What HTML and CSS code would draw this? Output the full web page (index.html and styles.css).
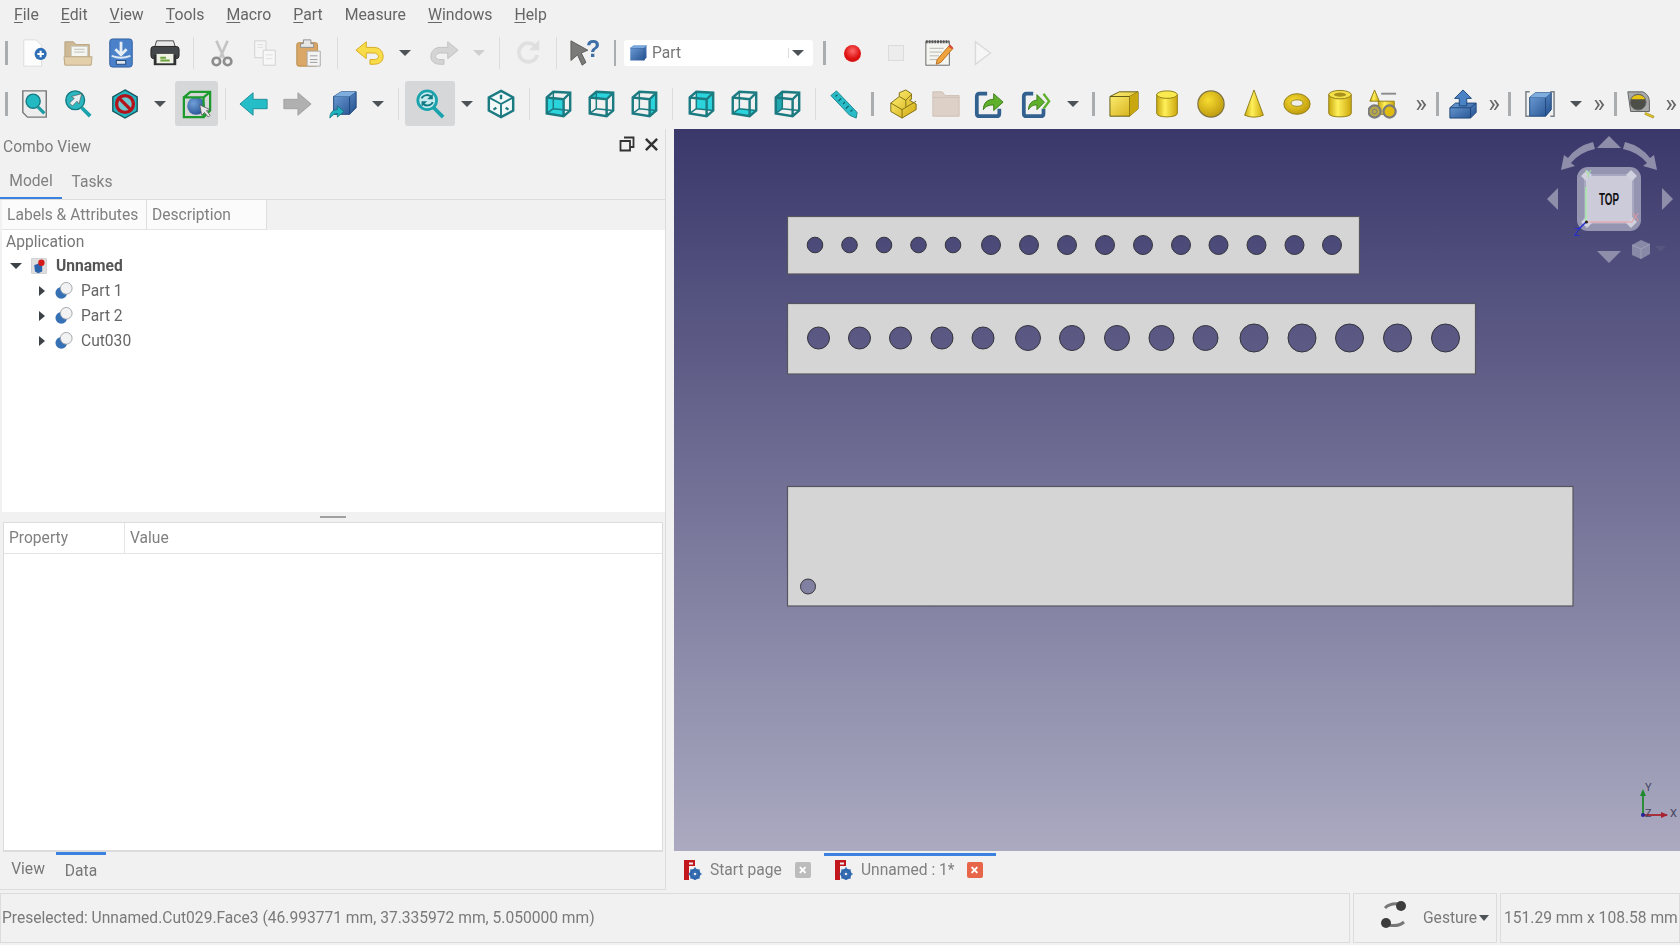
FILE: index.html
```html
<!DOCTYPE html>
<html lang="en">
<head>
    <meta charset="UTF-8">
    <meta name="viewport" content="width=device-width, initial-scale=1.0">
    <title>FreeCAD</title>
    <link rel="stylesheet" href="styles.css">
</head>
<body>
    <svg class="sprite" xmlns="http://www.w3.org/2000/svg">
        <defs>
            <linearGradient id="gy" x1="0" y1="0" x2="1" y2="1"><stop offset="0" stop-color="#fff27a"/><stop offset="1" stop-color="#d2a90e"/></linearGradient>
            <linearGradient id="gc" x1="0" y1="0" x2="1" y2="0"><stop offset="0" stop-color="#c9a80f"/><stop offset=".4" stop-color="#fff05a"/><stop offset="1" stop-color="#cda70d"/></linearGradient>
            <linearGradient id="gb" x1="0" y1="0" x2="1" y2="1"><stop offset="0" stop-color="#6f9fd8"/><stop offset="1" stop-color="#23508f"/></linearGradient>
            <radialGradient id="gs" cx=".4" cy=".35" r=".75"><stop offset="0" stop-color="#f8dc30"/><stop offset="1" stop-color="#b8930b"/></radialGradient>
            <radialGradient id="gball" cx=".35" cy=".35" r=".8"><stop offset="0" stop-color="#6f9fd8"/><stop offset="1" stop-color="#1f4b8e"/></radialGradient>

            <symbol id="new" viewBox="0 0 32 32"><path d="M4 2h13l6 6v22H4z" fill="#fdfdfd" stroke="#dcdcdc"/><circle cx="22" cy="17" r="6.500" fill="#2f6fb5"/><path d="M22 13.500v7M18.500 17h7" stroke="#fff" stroke-width="2.200"/></symbol>
            <symbol id="open" viewBox="0 0 32 32"><path d="M2 28V4h9l3 3h14v21z" fill="#cdb996" stroke="#b7a37f"/><rect x="9" y="9" width="17" height="11" fill="#f5f5f2" stroke="#cfcfc8"/><path d="M12 12h11M12 15h11" stroke="#bdbdb5"/><path d="M1 20h30l-1 9H2z" fill="#e3cfaa" stroke="#bba884"/></symbol>
            <symbol id="save" viewBox="0 0 32 32"><rect x="4" y="1" width="24" height="30" rx="3" fill="#4a81c9" stroke="#2f5f9f"/><path d="M16 4v13M10 12l6 6 6-6" fill="none" stroke="#e6edf5" stroke-width="3"/><path d="M6 19q10 4 20 0" fill="none" stroke="#dfe8f2" stroke-width="2"/><rect x="11" y="24" width="10" height="4" fill="#e0e6ee" stroke="#23487a"/></symbol>
            <symbol id="print" viewBox="0 0 32 32"><path d="M7 3h18l2 7H5z" fill="#e8e8e8" stroke="#444"/><rect x="1" y="9" width="30" height="13" rx="3" fill="#45484a" stroke="#222"/><rect x="4" y="18" width="24" height="11" fill="#2e3032"/><rect x="7" y="17" width="18" height="10" fill="#eef1e4"/><path d="M11 21h6M11 24h10" stroke="#6da33c" stroke-width="2"/></symbol>
            <symbol id="cut" viewBox="0 0 32 32"><path d="M10 3l8 18M22 3l-8 18" stroke="#c4c4c4" stroke-width="2.800"/><circle cx="10" cy="25" r="4" fill="none" stroke="#8d8d8d" stroke-width="2.800"/><circle cx="22" cy="25" r="4" fill="none" stroke="#8d8d8d" stroke-width="2.800"/></symbol>
            <symbol id="copy" viewBox="0 0 32 32"><path d="M5 3h12v18H5z" fill="#f5f5f5" stroke="#d0d0d0"/><path d="M14 13h13v16H14z" fill="#f7f7f7" stroke="#d0d0d0"/><path d="M8 7h6M8 10h6M17 18h7M17 22h7" stroke="#dedede"/></symbol>
            <symbol id="paste" viewBox="0 0 32 32"><rect x="3" y="5" width="22" height="25" rx="2" fill="#dba766" stroke="#b98844"/><path d="M10 6V2h8v4h3v4H7V6z" fill="#e6e6e6" stroke="#8b8b8b"/><path d="M14 14h14v16H14z" fill="#f3f3f3" stroke="#aaa"/><path d="M17 19h8M17 23h8M17 26h8" stroke="#9a9a9a"/></symbol>
            <symbol id="undo" viewBox="0 0 32 32"><path d="M1 13L12 4v6h8c7 0 10 5 10 10s-4 8-10 8h-4v-5h4c3 0 5-1 5-3s-2-4-5-4h-8v6z" fill="#f9dc4a" stroke="#d5a919"/></symbol>
            <symbol id="redo" viewBox="0 0 32 32"><path d="M31 13L20 4v6h-8C5 10 2 15 2 20s4 8 10 8h4v-5h-4c-3 0-5-1-5-3s2-4 5-4h8v6z" fill="#d4d4d4" stroke="#c0c0c0"/></symbol>
            <symbol id="refresh" viewBox="0 0 32 32"><path d="M26 18a10 10 0 1 1-3-10" fill="none" stroke="#e0e0e0" stroke-width="4"/><path d="M28 2v11H17z" fill="#dfdfdf"/></symbol>
            <symbol id="help" viewBox="0 0 32 32"><path d="M1 3l18 10-7 3 5 10-4 3-5-11-7 6z" fill="#7a7a78" stroke="#5c5c5a"/><text x="17" y="20" class="help-mark">?</text></symbol>
            <symbol id="part" viewBox="0 0 32 32"><path d="M2 8l5-4h21v19l-4 5H2z" fill="url(#gb)"/><path d="M2 8h22v20M24 8l4-4" fill="none" stroke="#2a5a99"/><path d="M2 8l5-4h21l-4 4z" fill="#79a8dd"/></symbol>
            <symbol id="macroedit" viewBox="0 0 32 32"><rect x="2" y="4" width="25" height="25" fill="#f4f4f0" stroke="#666"/><path d="M2 4h25" stroke="#555" stroke-width="3" stroke-dasharray="2 1"/><path d="M6 11h15M6 15h13M6 19h10M6 23h8" stroke="#b5b5b0"/><path d="M14 23L27 8l4 3-13 15-5 2z" fill="#f0a23c" stroke="#b76f1f"/><path d="M26 9l4 3 1-2-3-3z" fill="#d94a3a"/></symbol>
            <symbol id="play" viewBox="0 0 32 32"><path d="M9 4l16 12L9 28z" fill="#f6f6f6" stroke="#dadada" stroke-width="1.500"/></symbol>
            <symbol id="fitall" viewBox="0 0 32 32"><path d="M3 2h25v28H8l-5-5z" fill="#ededed" stroke="#777" stroke-width="1.500"/><circle cx="14" cy="13" r="7.500" fill="#22b9c3" stroke="#167a82" stroke-width="1.500"/><path d="M19 19l7 7" stroke="#1a9aa3" stroke-width="3.500"/></symbol>
            <symbol id="fitsel" viewBox="0 0 32 32"><circle cx="13" cy="12" r="10" fill="#2ab7c0" stroke="#167a82" stroke-width="1.500"/><path d="M20 20l9 9" stroke="#1aa3ac" stroke-width="4"/><path d="M20 5l-3 11-2-3-5 5-3-3 5-5-3-2z" fill="#e6eef0" stroke="#555" stroke-width=".7"/></symbol>
            <symbol id="draw" viewBox="0 0 32 32"><path d="M16 1l13 7.500v15L16 31 3 23.500v-15z" fill="#24b7c2" stroke="#17585f" stroke-width="1.500"/><circle cx="16" cy="16" r="9" fill="#6fc7cf" stroke="#b3141c" stroke-width="3.500"/><path d="M10 10l12 12" stroke="#b3141c" stroke-width="3.500"/></symbol>
            <symbol id="bbox" viewBox="0 0 32 32"><circle cx="15" cy="18" r="9.500" fill="url(#gball)"/><path d="M2 9h21v21H2zM2 9l7-6h21v20l-7 7M23 9l7-6" fill="none" stroke="#1d9a2d" stroke-width="2.400"/><path d="M19 17l2 11 3-3 4 5 2-2-4-5 4-1z" fill="#e8e8ea" stroke="#555" stroke-width=".8"/></symbol>
            <symbol id="back" viewBox="0 0 32 32"><path d="M1 16L15 4v7h15v10H15v7z" fill="#25bdc8" stroke="#1a8d96"/></symbol>
            <symbol id="forward" viewBox="0 0 32 32"><path d="M31 16L17 4v7H2v10h15v7z" fill="#b0b0b0" stroke="#a0a0a0"/></symbol>
            <symbol id="sync" viewBox="0 0 32 32"><path d="M6 8l8-5h16v17l-7 7H6z" fill="url(#gb)" stroke="#1d4478"/><path d="M6 8h17v19M23 8l7-5" fill="none" stroke="#1d4478"/><path d="M6 8l8-5h16l-7 5z" fill="#7fadde"/><path d="M2 31c0-6 3-9 8-9v-4l7 6-7 6v-4c-3 0-5 2-8 5z" fill="#1fb3bf" stroke="#11717a" stroke-width=".8"/></symbol>
            <symbol id="zoomsync" viewBox="0 0 32 32"><circle cx="13" cy="12" r="10" fill="#c6eaee" stroke="#1aa3ac" stroke-width="3"/><path d="M20 20l10 10" stroke="#1aa3ac" stroke-width="4"/><path d="M7 10c2-4 8-5 11-1M19 14c-2 4-8 5-11 1" fill="none" stroke="#127a82" stroke-width="2"/><path d="M19 5v6h-6zM7 19v-6h6z" fill="#127a82"/></symbol>
            <g id="wire"><path d="M4 9l7-6 18 1v19l-7 6-18-3zM4 9l18 2 7-7M22 11v18" fill="none" stroke="#1c7a81" stroke-width="2.600"/><path d="M11 3v18l-7 5M11 21l18 2" fill="none" stroke="#1c7a81" stroke-width="1.600"/></g>
            <symbol id="iso" viewBox="0 0 32 32"><path d="M16 2l13 7v14l-13 7-13-7V9z" fill="#f3f8f8" stroke="#1c7a81" stroke-width="2.600"/><path d="M3 9l13 7 13-7M16 16v14" fill="none" stroke="#1c7a81" stroke-width="2"/><path d="M16 6v5M8 22l3-2M24 22l-3-2" stroke="#1c7a81" stroke-width="2.500"/></symbol>
            <symbol id="vfront" viewBox="0 0 32 32"><path d="M4 9l18 2v18L4 26z" fill="#2bd3dc"/><use href="#wire"/></symbol>
            <symbol id="vtop" viewBox="0 0 32 32"><path d="M4 9l7-6 18 1-7 7z" fill="#2bd3dc"/><use href="#wire"/></symbol>
            <symbol id="vright" viewBox="0 0 32 32"><path d="M22 11l7-7v19l-7 6z" fill="#2bd3dc"/><use href="#wire"/></symbol>
            <symbol id="vrear" viewBox="0 0 32 32"><path d="M11 3l18 1v19l-18-2z" fill="#2bd3dc"/><use href="#wire"/></symbol>
            <symbol id="vbottom" viewBox="0 0 32 32"><path d="M4 26l7-5 18 2-7 6z" fill="#2bd3dc"/><use href="#wire"/></symbol>
            <symbol id="vleft" viewBox="0 0 32 32"><path d="M4 9l7-6v18l-7 5z" fill="#1fa8b0"/><use href="#wire"/></symbol>
            <symbol id="ruler" viewBox="0 0 32 32"><path d="M2 7l6-5 22 23-1 6-7-3z" fill="#27bcc7" stroke="#17838c"/><path d="M9 6l-2 2M13 10l-3 3M17 14l-2 2M21 18l-3 3M25 22l-2 2" stroke="#0f5f66" stroke-width="1.300"/></symbol>
            <symbol id="group" viewBox="0 0 32 32"><path d="M3 15l9-7v-4l7-3 6 4v6l-2 1 7 4v6l-15 9-12-7z" fill="url(#gy)" stroke="#7d6d10"/><path d="M3 15l12 7 15-9M15 22v9M12 8l7 4 6-6M19 12v7" fill="none" stroke="#7d6d10"/></symbol>
            <symbol id="folder" viewBox="0 0 32 32"><path d="M2 29V3h10l3 4h15v22z" fill="#ddd1c7" stroke="#cdbfb3"/><path d="M2 9h28" stroke="#cdbfb3"/></symbol>
            <symbol id="link" viewBox="0 0 32 32"><path d="M14 5H6q-3 0-3 3v18q0 3 3 3h18q3 0 3-3v-5" fill="none" stroke="#32608f" stroke-width="4"/><path d="M10 22c0-7 4-11 11-11V5l10 9-10 9v-6c-5 0-8 1-11 5z" fill="#5fb02c" stroke="#3a7a14"/></symbol>
            <symbol id="sublink" viewBox="0 0 32 32"><path d="M13 5H6q-3 0-3 3v18q0 3 3 3h15q3 0 3-3v-5" fill="none" stroke="#32608f" stroke-width="4"/><path d="M8 22c0-6 4-10 9-10V6l8 8-8 8v-5c-4 0-6 1-9 5z" fill="#5fb02c" stroke="#3a7a14"/><path d="M24 5l6 8-6 8" fill="none" stroke="#5fb02c" stroke-width="2.500"/></symbol>
            <symbol id="box" viewBox="0 0 32 32"><path d="M1 8l10-5h20v18l-9 8H1z" fill="url(#gy)" stroke="#5f5510"/><path d="M1 8h21v21M22 8l9-5" fill="none" stroke="#5f5510"/><path d="M22 8l9-5v18l-9 8z" fill="#c9a70f"/></symbol>
            <symbol id="cyl" viewBox="0 0 32 32"><path d="M5 6v20c0 5 22 5 22 0V6z" fill="url(#gc)" stroke="#8f7d14"/><ellipse cx="16" cy="6" rx="11" ry="4" fill="#f9ea50" stroke="#8f7d14"/></symbol>
            <symbol id="sphere" viewBox="0 0 32 32"><circle cx="16" cy="16" r="14" fill="url(#gs)" stroke="#7f7440" stroke-width="1.300"/></symbol>
            <symbol id="cone" viewBox="0 0 32 32"><path d="M16 1L6 28q10 4 20 0z" fill="url(#gc)" stroke="#8f7d14"/></symbol>
            <symbol id="torus" viewBox="0 0 32 32"><ellipse cx="16" cy="16" rx="14" ry="11" fill="url(#gs)" stroke="#8f7d14"/><ellipse cx="16" cy="15" rx="6.500" ry="3.500" fill="#efeeea" stroke="#9b8a1a"/></symbol>
            <symbol id="tube" viewBox="0 0 32 32"><path d="M4 6v20c0 5 24 5 24 0V6z" fill="url(#gc)" stroke="#8f7d14"/><ellipse cx="16" cy="6" rx="12" ry="4.500" fill="#f4e14a" stroke="#8f7d14"/><ellipse cx="16" cy="6" rx="6.500" ry="2.200" fill="#a8921c"/></symbol>
            <symbol id="builder" viewBox="0 0 32 32"><path d="M7 1L2 13h10z" fill="url(#gc)" stroke="#8f7d14"/><path d="M14 5h16" stroke="#8b8b8b" stroke-width="2"/><path d="M11 13h17v14H11z" fill="url(#gc)" stroke="#8f7d14"/><circle cx="7" cy="24" r="6.500" fill="#b8a84a" stroke="#7b7b7b" stroke-width="2.400"/><circle cx="7" cy="24" r="2.500" fill="none" stroke="#7b7b7b"/><circle cx="23" cy="24" r="6.500" fill="#e0bb10" stroke="#7b7b7b" stroke-width="2.400"/></symbol>
            <symbol id="extrude" viewBox="0 0 32 32"><path d="M2 20l6-5h22v10l-6 6H2z" fill="url(#gb)" stroke="#1d4478"/><path d="M2 20h22v11M24 20l6-5" fill="none" stroke="#1d4478"/><path d="M16 1l9 9h-5v8h-8v-8H7z" fill="#4a82c6" stroke="#1d4478"/></symbol>
            <symbol id="section" viewBox="0 0 32 32"><path d="M5 3H1v26h4M27 3h4v26h-4" fill="none" stroke="#7d8285" stroke-width="1.600"/><path d="M5 9l6-5h17v18l-6 7H5z" fill="url(#gb)" stroke="#1d4478"/><path d="M5 9h17v20M22 9l6-5" fill="none" stroke="#1d4478"/><path d="M5 9l6-5h17l-6 5z" fill="#7fadde"/></symbol>
            <symbol id="tape" viewBox="0 0 32 32"><path d="M3 3h16q7 3 7 11v10H6z" fill="#a9abab" stroke="#5e6060"/><circle cx="14" cy="14" r="8.500" fill="#4e4e48" stroke="#6c6c6c"/><path d="M6.500 11a8.500 8.500 0 0 1 15 0z" fill="#e7c414"/><path d="M22 25l9 4-1 2-9-4z" fill="#e8c71a" stroke="#8d7810" stroke-width=".6"/></symbol>
            <symbol id="doc" viewBox="0 0 20 20"><rect x=".5" y=".5" width="19" height="19" rx="1" fill="#dedede" stroke="#c8c8c8"/><path d="M4 9l5-2 5 2v8l-5 2-4-2z" fill="#2c64ab"/><circle cx="13" cy="6" r="4" fill="#d51a1a"/></symbol>
            <symbol id="cutobj" viewBox="0 0 20 20"><circle cx="7" cy="12" r="6.500" fill="#3670b5"/><circle cx="12.500" cy="7" r="6.500" fill="#f2f2f2" stroke="#9aa0a8"/></symbol>
            <symbol id="fc" viewBox="0 0 20 20"><path d="M2 0h11v6H7v14H2z" fill="#c2171d"/><rect x="7" y="2.500" width="4" height="2" fill="#eee"/><circle cx="13" cy="14" r="4" fill="none" stroke="#2f67ad" stroke-width="3"/><path d="M13 7.500v13M6.500 14h13M8.500 9.500l9 9M17.500 9.500l-9 9" stroke="#2f67ad" stroke-width="1.600"/><circle cx="13" cy="14" r="1.300" fill="#dfe7f1"/></symbol>
        </defs>
    </svg>

    <div class="app">
        <nav class="menubar">
            <span><u>F</u>ile</span>
            <span><u>E</u>dit</span>
            <span><u>V</u>iew</span>
            <span><u>T</u>ools</span>
            <span><u>M</u>acro</span>
            <span><u>P</u>art</span>
            <span>Measure</span>
            <span><u>W</u>indows</span>
            <span><u>H</u>elp</span>
        </nav>

        <div class="toolbar top-row">
            <i class="handle"></i>
            <span class="btn"><svg class="icon"><use href="#new"/></svg></span>
            <span class="btn"><svg class="icon"><use href="#open"/></svg></span>
            <span class="btn"><svg class="icon"><use href="#save"/></svg></span>
            <span class="btn ml1"><svg class="icon"><use href="#print"/></svg></span>
            <i class="sep"></i>
            <span class="btn"><svg class="icon"><use href="#cut"/></svg></span>
            <span class="btn"><svg class="icon"><use href="#copy"/></svg></span>
            <span class="btn ml1"><svg class="icon"><use href="#paste"/></svg></span>
            <i class="sep"></i>
            <span class="btn ml4"><svg class="icon"><use href="#undo"/></svg></span>
            <span class="dd"></span>
            <span class="btn ml4"><svg class="icon"><use href="#redo"/></svg></span>
            <span class="dd off"></span>
            <i class="sep"></i>
            <span class="btn"><svg class="icon"><use href="#refresh"/></svg></span>
            <i class="sep"></i>
            <span class="btn"><svg class="icon"><use href="#help"/></svg></span>
            <i class="sep dark-thin ml2"></i>
            <div class="workbench">
                <svg class="wb-icon"><use href="#part"/></svg>
                <span class="wb-name">Part</span>
                <i class="wb-tick"></i>
                <span class="dd-arrow"></span>
            </div>
            <i class="sep dark ml4"></i>
            <span class="btn"><i class="rec"></i></span>
            <span class="btn"><i class="stop"></i></span>
            <span class="btn"><svg class="icon"><use href="#macroedit"/></svg></span>
            <span class="btn"><svg class="icon"><use href="#play"/></svg></span>
        </div>

        <div class="toolbar">
            <i class="handle"></i>
            <span class="btn"><svg class="icon"><use href="#fitall"/></svg></span>
            <span class="btn"><svg class="icon"><use href="#fitsel"/></svg></span>
            <span class="btn ml4"><svg class="icon"><use href="#draw"/></svg></span>
            <span class="dd"></span>
            <span class="btn on ml2"><svg class="icon"><use href="#bbox"/></svg></span>
            <i class="sep"></i>
            <span class="btn"><svg class="icon"><use href="#back"/></svg></span>
            <span class="btn"><svg class="icon"><use href="#forward"/></svg></span>
            <span class="btn ml3"><svg class="icon"><use href="#sync"/></svg></span>
            <span class="dd"></span>
            <i class="sep"></i>
            <span class="btn on wide"><svg class="icon"><use href="#zoomsync"/></svg></span>
            <span class="dd slim"></span>
            <span class="btn"><svg class="icon"><use href="#iso"/></svg></span>
            <i class="sep"></i>
            <span class="btn"><svg class="icon"><use href="#vfront"/></svg></span>
            <span class="btn"><svg class="icon"><use href="#vtop"/></svg></span>
            <span class="btn"><svg class="icon"><use href="#vright"/></svg></span>
            <i class="sep"></i>
            <span class="btn"><svg class="icon"><use href="#vrear"/></svg></span>
            <span class="btn"><svg class="icon"><use href="#vbottom"/></svg></span>
            <span class="btn"><svg class="icon"><use href="#vleft"/></svg></span>
            <i class="sep"></i>
            <span class="btn"><svg class="icon"><use href="#ruler"/></svg></span>
            <i class="sep dark"></i>
            <span class="btn ml2"><svg class="icon"><use href="#group"/></svg></span>
            <span class="btn"><svg class="icon"><use href="#folder"/></svg></span>
            <span class="btn"><svg class="icon"><use href="#link"/></svg></span>
            <span class="btn ml4"><svg class="icon"><use href="#sublink"/></svg></span>
            <span class="dd ml2"></span>
            <i class="sep dark"></i>
            <span class="btn ml2"><svg class="icon"><use href="#box"/></svg></span>
            <span class="btn"><svg class="icon"><use href="#cyl"/></svg></span>
            <span class="btn ml1"><svg class="icon"><use href="#sphere"/></svg></span>
            <span class="btn"><svg class="icon"><use href="#cone"/></svg></span>
            <span class="btn"><svg class="icon"><use href="#torus"/></svg></span>
            <span class="btn"><svg class="icon"><use href="#tube"/></svg></span>
            <span class="btn"><svg class="icon"><use href="#builder"/></svg></span>
            <span class="more ml8">»</span>
            <i class="sep dark ml1"></i>
            <span class="btn slim ml1"><svg class="icon"><use href="#extrude"/></svg></span>
            <span class="more ml3">»</span>
            <i class="sep dark"></i>
            <span class="btn slim ml6"><svg class="icon"><use href="#section"/></svg></span>
            <span class="dd slim ml5"></span>
            <span class="more ml2">»</span>
            <i class="sep dark ml1"></i>
            <span class="btn slim"><svg class="icon"><use href="#tape"/></svg></span>
            <span class="more ml3">»</span>
        </div>

        <div class="main">
            <aside class="combo">
                <div class="combo-title">
                    <span>Combo View</span>
                    <svg class="dock-float" viewBox="0 0 16 16"><path d="M5 1.500h9.500V11H11M1.500 5H11v9.500H1.500z" fill="none" stroke="#333" stroke-width="1.800"/></svg>
                    <svg class="dock-close" viewBox="0 0 16 16"><path d="M2 2l12 12M14 2L2 14" stroke="#333" stroke-width="2.600"/></svg>
                </div>
                <div class="tabs">
                    <span class="tab active">Model</span>
                    <span class="tab">Tasks</span>
                </div>
                <div class="tree-head">
                    <span class="head-cell first">Labels &amp; Attributes</span>
                    <span class="head-cell second">Description</span>
                </div>
                <div class="tree">
                    <div class="tree-row app-row">Application</div>
                    <div class="tree-row doc-row">
                        <span class="arrow down"></span>
                        <svg class="doc-icon"><use href="#doc"/></svg>
                        <b>Unnamed</b>
                    </div>
                    <div class="tree-row obj-row">
                        <span class="arrow"></span>
                        <svg class="obj-icon"><use href="#cutobj"/></svg>
                        <span>Part 1</span>
                    </div>
                    <div class="tree-row obj-row">
                        <span class="arrow"></span>
                        <svg class="obj-icon"><use href="#cutobj"/></svg>
                        <span>Part 2</span>
                    </div>
                    <div class="tree-row obj-row">
                        <span class="arrow"></span>
                        <svg class="obj-icon"><use href="#cutobj"/></svg>
                        <span>Cut030</span>
                    </div>
                </div>
                <div class="splitter"><i></i></div>
                <div class="props">
                    <div class="props-head">
                        <span class="prop-col">Property</span>
                        <span>Value</span>
                    </div>
                </div>
                <div class="prop-tabs">
                    <span class="prop-tab">View</span>
                    <span class="prop-tab active">Data</span>
                </div>
            </aside>

            <section class="workspace">
                <div class="viewport">
                    <svg class="scene" viewBox="674 129 1006 722">
                        <defs>
                            <linearGradient id="bg" gradientUnits="userSpaceOnUse" x1="0" y1="129" x2="0" y2="851">
                                <stop offset="0" stop-color="#3a386b"/>
                                <stop offset="1" stop-color="#abaac1"/>
                            </linearGradient>
                        </defs>
                        <rect x="674" y="129" width="1006" height="722" fill="url(#bg)"/>

                        <rect class="face" x="787.500" y="216.500" width="572" height="57.500"/>
                        <rect class="face" x="787.500" y="303.500" width="688" height="70.500"/>
                        <rect class="face" x="787.500" y="486.500" width="785.500" height="119.500"/>

                        <g class="holes">
                            <circle cx="815" cy="245" r="7.800"/><circle cx="849.500" cy="245" r="7.800"/><circle cx="884" cy="245" r="7.800"/><circle cx="918.500" cy="245" r="7.800"/><circle cx="953" cy="245" r="7.800"/>
                            <circle cx="991" cy="245" r="9.500"/><circle cx="1029" cy="245" r="9.500"/><circle cx="1067" cy="245" r="9.500"/><circle cx="1105" cy="245" r="9.500"/><circle cx="1143" cy="245" r="9.500"/>
                            <circle cx="1181" cy="245" r="9.500"/><circle cx="1218.500" cy="245" r="9.500"/><circle cx="1256.500" cy="245" r="9.500"/><circle cx="1294.500" cy="245" r="9.500"/><circle cx="1332" cy="245" r="9.500"/>

                            <circle cx="818.500" cy="338" r="11"/><circle cx="859.500" cy="338" r="11"/><circle cx="900.500" cy="338" r="11"/><circle cx="942" cy="338" r="11"/><circle cx="983" cy="338" r="11"/>
                            <circle cx="1028" cy="338" r="12.500"/><circle cx="1072" cy="338" r="12.500"/><circle cx="1117" cy="338" r="12.500"/><circle cx="1161.500" cy="338" r="12.500"/><circle cx="1205.500" cy="338" r="12.500"/>
                            <circle cx="1254" cy="338" r="14"/><circle cx="1302" cy="338" r="14"/><circle cx="1349.500" cy="338" r="14"/><circle cx="1397.500" cy="338" r="14"/><circle cx="1445.500" cy="338" r="14"/>

                            <circle cx="808" cy="586.500" r="7.500"/>
                        </g>

                        <g class="nav-arrows">
                            <path d="M1609 136l12 12h-24z"/>
                            <path d="M1609 263l12-12h-24z"/>
                            <path d="M1547 199l11-11v22z"/>
                            <path d="M1673 199l-11-11v22z"/>
                            <path d="M1593 142l2 7q-15 3-24 14l4 3-14 4 3-15 4 3q9-12 25-16z"/>
                            <path d="M1625 142l-2 7q15 3 24 14l-4 3 14 4-3-15-4 3q-9-12-25-16z"/>
                        </g>
                        <rect x="1577" y="167" width="64" height="64" rx="11" fill="#9595b1"/>
                        <rect x="1585" y="175" width="48" height="48" rx="3" fill="#cbcbda" stroke="#a8a8c1" stroke-width="2"/>
                        <g class="nav-corners">
                            <path d="M1581 176l6-6 5 5-6 6z"/>
                            <path d="M1637 176l-6-6-5 5 6 6z"/>
                            <path d="M1581 222l6 6 5-5-6-6z"/>
                            <path d="M1637 222l-6 6-5-5 6-6z"/>
                        </g>
                        <path d="M1586 222v-35" stroke="#a9eca9" stroke-width="1.500"/>
                        <path d="M1587 222h46" stroke="#e8aeb4" stroke-width="1.500"/>
                        <path d="M1586 222l-7 7" stroke="#1f2bd6" stroke-width="1.500"/>
                        <circle cx="1586.500" cy="222" r="1.500" fill="#222"/>
                        <text x="1599" y="205" class="cube-label" textLength="20" lengthAdjust="spacingAndGlyphs">TOP</text>
                        <text x="1585" y="178" class="nav-axis ax-y">Y</text>
                        <text x="1632" y="221" class="nav-axis ax-x">X</text>
                        <text x="1574" y="236" class="nav-axis ax-z">Z</text>
                        <path d="M1632 245l9-5 9 4v10l-9 5-9-4z" fill="#8889a6"/>
                        <path d="M1632 245l9 4 9-5M1641 249v10" fill="none" stroke="#9d9eb6"/>
                        <path d="M1655 246h11l-5.500 6z" fill="#55557f"/>

                        <path d="M1643 815v-24" stroke="#1f8a2c" stroke-width="1.800"/>
                        <path d="M1643 789l-3 7h6z" fill="#1f8a2c"/>
                        <path d="M1643 815h24" stroke="#a8232f" stroke-width="1.800"/>
                        <path d="M1668 815l-7-3v6z" fill="#a8232f"/>
                        <circle cx="1643" cy="815" r="2" fill="#23239a"/>
                        <text x="1645" y="791" class="gizmo-label">Y</text>
                        <text x="1645" y="817" class="gizmo-label">Z</text>
                        <text x="1670" y="817" class="gizmo-label">X</text>
                    </svg>
                </div>
                <div class="doc-tabs">
                    <div class="doc-tab first">
                        <svg class="fc-icon"><use href="#fc"/></svg>
                        <span>Start page</span>
                        <i class="tab-close grey">×</i>
                    </div>
                    <div class="doc-tab current">
                        <svg class="fc-icon"><use href="#fc"/></svg>
                        <span>Unnamed : 1*</span>
                        <i class="tab-close red">×</i>
                    </div>
                </div>
            </section>
        </div>

        <footer class="statusbar">
            <div class="status-cell status-msg">Preselected: Unnamed.Cut029.Face3 (46.993771 mm, 37.335972 mm, 5.050000 mm)</div>
            <div class="status-cell status-nav">
                <svg class="gesture" viewBox="0 0 28 28">
                    <path d="M5 7q5-5 14-4" fill="none" stroke="#777" stroke-width="3"/>
                    <circle cx="21" cy="5" r="5" fill="#3c3c3c"/>
                    <path d="M9 24q9 2 15-3" fill="none" stroke="#777" stroke-width="3"/>
                    <circle cx="6" cy="22" r="5" fill="#3c3c3c"/>
                </svg>
                <span>Gesture</span>
                <span class="dd-arrow"></span>
            </div>
            <div class="status-cell status-dim">151.29 mm x 108.58 mm</div>
        </footer>
    </div>
</body>
</html>
```

FILE: styles.css
```css
html, body {
    margin: 0;
    padding: 0;
    height: 100%;
    overflow: hidden;
}
body {
    background-color: #f1f1f1;
    color: #6d6d6d;
    font-family: 'Roboto', 'Liberation Sans', sans-serif;
    font-size: 15.6px;
}
.sprite {
    display: block;
    width: 0;
    height: 0;
}
.app {
    display: flex;
    flex-direction: column;
    width: 1680px;
    height: 945px;
    filter: blur(0.4px);
}

/* menu */
.menubar {
    display: flex;
    align-items: center;
    gap: 22px;
    height: 28px;
    padding-left: 14px;
    font-size: 15.8px;
    color: #666;
}
.menubar u {
    text-underline-offset: 2px;
}

/* toolbars */
.toolbar {
    display: flex;
    align-items: center;
    height: 51px;
    padding-left: 5px;
    overflow: hidden;
}
.top-row {
    height: 50px;
}
.handle {
    width: 3px;
    height: 24px;
    margin-right: 5px;
    background-color: #a9adb0;
    flex: none;
}
.btn {
    display: flex;
    align-items: center;
    justify-content: center;
    flex: none;
    width: 43px;
    height: 45px;
    border-radius: 3px;
}
.btn.on {
    background-color: #d6d7d9;
}
.btn.wide {
    width: 50px;
}
.btn.slim {
    width: 38px;
}
.icon {
    width: 30px;
    height: 30px;
}
.sep {
    display: block;
    flex: none;
    width: 14px;
    height: 32px;
    background: linear-gradient(#dcdcdc, #dcdcdc) center / 1px 100% no-repeat;
}
.sep.dark {
    height: 24px;
    background: linear-gradient(#a9adb0, #a9adb0) center / 3px 100% no-repeat;
}
.sep.dark-thin {
    height: 26px;
    background: linear-gradient(#a9adb0, #a9adb0) center / 2px 100% no-repeat;
}
.more + .sep.dark {
    width: 12px;
}
.dd {
    flex: none;
    width: 27px;
    display: flex;
    justify-content: center;
}
.dd.slim {
    width: 24px;
}
.dd::after, .dd-arrow {
    content: '';
    width: 0;
    height: 0;
    border-left: 6px solid transparent;
    border-right: 6px solid transparent;
    border-top: 6px solid #4d5257;
}
.dd.off::after {
    border-top-color: #cfcfcf;
}
.more {
    flex: none;
    width: 18px;
    text-align: center;
    font-size: 25px;
    line-height: 1;
    color: #666;
}
.ml1 { margin-left: 1px; }
.ml2 { margin-left: 2px; }
.ml3 { margin-left: 3px; }
.ml4 { margin-left: 4px; }
.ml5 { margin-left: 5px; }
.ml6 { margin-left: 6px; }
.ml8 { margin-left: 8px; }
.help-mark {
    font-family: 'Liberation Sans', sans-serif;
    font-size: 25px;
    font-weight: bold;
    fill: #3e6ea6;
}

/* workbench selector */
.workbench {
    display: flex;
    align-items: center;
    flex: none;
    width: 189px;
    height: 26px;
    margin-left: 2px;
    box-sizing: border-box;
    padding: 0 9px 0 5px;
    background-color: #fff;
    border-radius: 3px;
    color: #777;
}
.wb-icon {
    width: 20px;
    height: 20px;
    margin-right: 3px;
}
.wb-name {
    flex: 1;
}
.wb-tick {
    width: 1px;
    height: 10px;
    margin-right: 3px;
    background-color: #ddd;
}
.rec {
    width: 17px;
    height: 17px;
    border-radius: 50%;
    background: radial-gradient(circle at 50% 35%, #ff6a6a, #de1212 55%, #c80d0d);
}
.stop {
    width: 14px;
    height: 14px;
    border: 1px solid #dcdcdc;
    background-color: #ececec;
}

/* main area */
.main {
    display: flex;
    height: 764px;
}
.combo {
    display: flex;
    flex-direction: column;
    flex: none;
    width: 666px;
    height: 761px;
    border-right: 1px solid #dcdcdc;
    border-bottom: 1px solid #dcdcdc;
    box-sizing: border-box;
}
.combo-title {
    display: flex;
    align-items: center;
    flex: none;
    height: 35px;
    padding-left: 3px;
    color: #7c7c7c;
}
.combo-title span {
    flex: 1;
}
.dock-float {
    width: 16px;
    height: 16px;
    margin-right: 9px;
    margin-top: -5px;
}
.dock-close {
    width: 15px;
    height: 15px;
    margin-right: 6px;
    margin-top: -5px;
}
.tabs {
    display: flex;
    flex: none;
    height: 35px;
    border-bottom: 1px solid #dcdcdc;
}
.tab {
    display: flex;
    align-items: center;
    justify-content: center;
    box-sizing: border-box;
    width: 62px;
    height: 35px;
    color: #808080;
}
.tab + .tab {
    width: 60px;
}
.tab.active {
    border-bottom: 2px solid #3b82e0;
}
.tree-head {
    display: flex;
    flex: none;
    height: 30px;
    padding-left: 2px;
}
.head-cell {
    display: flex;
    align-items: center;
    box-sizing: border-box;
    height: 30px;
    background-color: #fbfbfb;
    border-right: 1px solid #dedede;
    border-bottom: 1px solid #e4e4e4;
    color: #808080;
}
.head-cell.first {
    width: 145px;
    padding-left: 5px;
}
.head-cell.second {
    width: 120px;
    padding-left: 5px;
}
.tree {
    flex: none;
    height: 282px;
    margin-left: 2px;
    background-color: #fff;
}
.tree-row {
    display: flex;
    align-items: center;
    height: 25px;
    color: #666;
}
.obj-row {
    height: 25.4px;
}
.app-row {
    height: 23px;
    padding-left: 4px;
    color: #777;
}
.doc-row b {
    color: #555;
    font-weight: 700;
}
.arrow {
    flex: none;
    width: 0;
    height: 0;
    margin-left: 37px;
    margin-right: 10px;
    border-left: 6px solid #3d4246;
    border-top: 5px solid transparent;
    border-bottom: 5px solid transparent;
}
.arrow.down {
    margin-left: 8px;
    margin-right: 9px;
    border-left: 6px solid transparent;
    border-right: 6px solid transparent;
    border-top: 6px solid #3d4246;
    border-bottom: 0;
}
.doc-icon {
    width: 16px;
    height: 16px;
    margin-right: 9px;
}
.obj-icon {
    width: 18px;
    height: 18px;
    margin-right: 8px;
}
.splitter {
    display: flex;
    align-items: center;
    justify-content: center;
    flex: none;
    height: 10px;
}
.splitter i {
    width: 26px;
    height: 2px;
    background-color: #9ea0a2;
}
.props {
    flex: none;
    height: 330px;
    margin: 0 2px 0 3px;
    box-sizing: border-box;
    background-color: #fff;
    border: 1px solid #dcdcdc;
    border-bottom-width: 2px;
}
.props-head {
    display: flex;
    align-items: center;
    height: 31px;
    box-sizing: border-box;
    border-bottom: 1px solid #e4e4e4;
    color: #808080;
}
.prop-col {
    display: flex;
    align-items: center;
    box-sizing: border-box;
    width: 121px;
    height: 100%;
    padding-left: 5px;
    margin-right: 5px;
    border-right: 1px solid #e4e4e4;
}
.prop-tabs {
    display: flex;
    flex: none;
    height: 34px;
}
.prop-tab {
    display: flex;
    align-items: center;
    justify-content: center;
    box-sizing: border-box;
    width: 50px;
    height: 34px;
    color: #777;
}
.prop-tab:first-child {
    width: 56px;
}
.prop-tab.active {
    border-top: 3px solid #3b82e0;
}

/* 3d view */
.workspace {
    display: flex;
    flex-direction: column;
    flex: 1;
    margin-left: 8px;
}
.viewport {
    flex: none;
    height: 722px;
}
.scene {
    display: block;
    width: 1006px;
    height: 722px;
}
.face {
    fill: #d5d5d5;
    stroke: #55555f;
    stroke-width: 1.200;
}
.holes circle {
    fill: url(#bg);
    stroke: #35353d;
    stroke-width: 1;
}
.nav-arrows path {
    fill: #8e8eab;
}
.nav-corners path {
    fill: #d0d0de;
}
.cube-label {
    font-family: 'Liberation Sans', sans-serif;
    font-size: 16px;
    font-weight: bold;
    fill: #111;
}
.nav-axis {
    font-family: 'Liberation Sans', sans-serif;
    font-size: 10px;
}
.ax-y { fill: #9fe09f; }
.ax-x { fill: #e09aa0; }
.ax-z { fill: #1f2bd6; }
.gizmo-label {
    font-family: 'Roboto', sans-serif;
    font-size: 11px;
    fill: #45455f;
}

/* document tabs */
.doc-tabs {
    display: flex;
    height: 42px;
}
.doc-tab {
    display: flex;
    align-items: center;
    box-sizing: border-box;
    height: 34px;
    margin-top: 2px;
    color: #808080;
}
.doc-tab.first {
    width: 150px;
    padding-left: 8px;
}
.doc-tab.current {
    width: 172px;
    height: 31px;
    padding-left: 9px;
    border-top: 3px solid #3b82e0;
}
.fc-icon {
    width: 20px;
    height: 20px;
    margin-right: 8px;
}
.tab-close {
    display: flex;
    align-items: center;
    justify-content: center;
    width: 16px;
    height: 16px;
    margin-left: 13px;
    border-radius: 2px;
    color: #fff;
    font-style: normal;
    font-size: 15px;
    font-weight: bold;
    line-height: 1;
}
.current .tab-close {
    margin-left: 12px;
}
.tab-close.grey {
    background-color: #bcbcbc;
}
.tab-close.red {
    background-color: #e7664a;
}

/* status bar */
.statusbar {
    display: flex;
    gap: 3px;
    height: 50px;
}
.status-cell {
    display: flex;
    align-items: center;
    box-sizing: border-box;
    height: 50px;
    border: 1px solid #dcdcdc;
    color: #7a7a7a;
}
.status-msg {
    width: 1350px;
    padding-left: 1px;
}
.status-nav {
    width: 144px;
    padding-left: 26px;
}
.status-nav .dd-arrow {
    margin-left: 2px;
    border-left-width: 5px;
    border-right-width: 5px;
    border-top-width: 6px;
}
.gesture {
    width: 28px;
    height: 28px;
    margin-right: 15px;
    margin-top: -6px;
}
.status-dim {
    flex: 1;
    padding-left: 3px;
    white-space: nowrap;
}
```
